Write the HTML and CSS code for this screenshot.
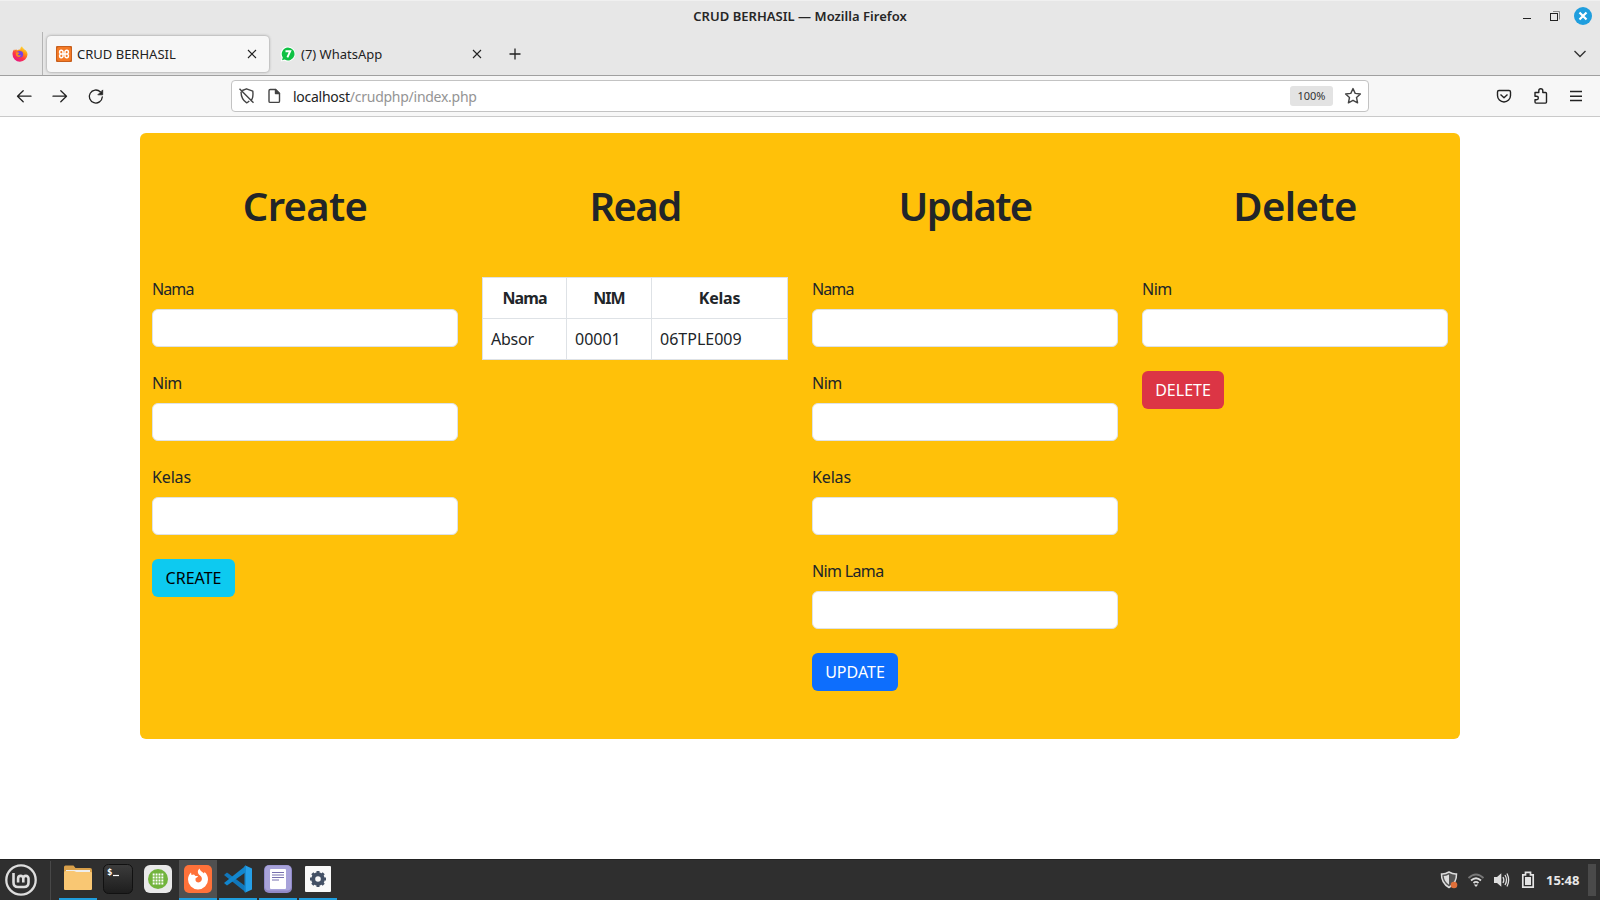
FILE: index.html
```html
<!DOCTYPE html>
<html lang="id">
<head>
<meta charset="utf-8">
<title>CRUD BERHASIL</title>
<link rel="stylesheet" href="styles.css">
</head>
<body>
<div class="desktop">
  <header class="titlebar">
    <span class="win-title">CRUD BERHASIL — Mozilla Firefox</span>
    <svg class="win-buttons" width="80" height="32" viewBox="1520 0 80 32">
      <path d="M1523 18.500h8" stroke="#222" fill="none"/>
      <path d="M1553 11.500h6.500v8" stroke="#8a8a8a" fill="none"/>
      <rect x="1550.500" y="13.500" width="7" height="7" stroke="#222" fill="none"/>
      <circle cx="1583" cy="16" r="9" fill="#1f9ede"/>
      <path d="M1579.500 12.500l7 7m0-7l-7 7" stroke="#fff" stroke-width="2.200"/>
    </svg>
  </header>

  <div class="tabstrip">
    <div class="pinned">
      <svg width="16" height="16" viewBox="0 0 16 16">
        <defs>
          <linearGradient id="fx" x1=".85" y1="0" x2=".25" y2="1"><stop offset="0" stop-color="#fff44f"/><stop offset=".35" stop-color="#ff980e"/><stop offset=".65" stop-color="#ff3647"/><stop offset="1" stop-color="#e31587"/></linearGradient>
        </defs>
        <path d="M8 15.700A7.500 7.500 0 0 1 .5 8C.5 6 1.200 4.500 2.200 3.200L2.500 4.500 4.200 3.200 5 4.500C6 3.800 7 3.500 8.500 3.500 8 2.500 8.800 1 10 .3 10.300 2 12 2.600 13 4L13.500 4C15 5.500 15.500 7 15.500 8.500A7.500 7.500 0 0 1 8 15.700z" fill="url(#fx)"/>
        <circle cx="7.800" cy="8.300" r="3.300" fill="#7542e5"/>
        <path d="M4 6.500c1.500-.5 2.500 0 3.500.2-.5 1.200-1.500 1.300-1.800 2 .8 1 2.500.7 3.300.2-.6 1.800-2.400 2.700-4 1.600C4 9.600 3.600 8 4 6.500z" fill="#ff8a16"/>
      </svg>
    </div>
    <div class="tab tab-active">
      <svg width="16" height="16" viewBox="0 0 16 16">
        <rect width="16" height="16" rx="1" fill="#c85f1c"/><rect x="1" y="1" width="14" height="14" rx="2" fill="#f47a26"/>
        <path d="M7 8H5.400a1.800 1.900 0 1 1 1.600-2.600v5.200A1.800 1.900 0 1 1 5.400 8M9 8h1.600A1.800 1.900 0 1 0 9 5.400v5.200A1.800 1.900 0 1 0 10.600 8M6.500 8h3" stroke="#fff" stroke-width="1.500" fill="none"/>
      </svg>
      <span class="tab-label">CRUD BERHASIL</span>
      <svg class="tab-close" width="10" height="10" viewBox="0 0 10 10"><path d="M1 1l8 8m0-8L1 9" stroke="#222" stroke-width="1.100"/></svg>
    </div>
    <div class="tab">
      <svg width="16" height="16" viewBox="0 0 16 16">
        <path d="M8 .5A7.500 7.500 0 1 1 4.500 14.700L.7 15.600 1.700 12A7.500 7.500 0 0 1 8 .5z" fill="#fff"/>
        <path d="M8 1.500A6.500 6.500 0 1 1 4.700 13.600L2 14.300 2.800 11.500A6.500 6.500 0 0 1 8 1.500z" fill="#0fc144"/>
        <path d="M5.500 5.200h4.700L7.400 11.400" stroke="#fff" stroke-width="1.900" fill="none"/>
      </svg>
      <span class="tab-label">(7) WhatsApp</span>
      <svg class="tab-close" width="10" height="10" viewBox="0 0 10 10"><path d="M1 1l8 8m0-8L1 9" stroke="#222" stroke-width="1.100"/></svg>
    </div>
    <svg class="newtab" width="12" height="12" viewBox="0 0 12 12"><path d="M6 .5v11M.5 6h11" stroke="#222" stroke-width="1.300"/></svg>
    <svg class="alltabs" width="14" height="8" viewBox="0 0 14 8"><path d="M1.500 1L7 6.500 12.500 1" stroke="#333" stroke-width="1.400" fill="none"/></svg>
  </div>

  <nav class="toolbar">
    <svg class="nav-icons" width="100" height="20" viewBox="10 87 100 20" fill="none" stroke="#222" stroke-width="1.300" stroke-linecap="round" stroke-linejoin="round">
      <path d="M31 97.200H17.500m5.700-5.500l-5.700 5.500 5.700 5.500"/>
      <path d="M53 97.200H66.500m-5.700-5.500l5.700 5.500-5.700 5.500"/>
      <path d="M102.300 98a6.500 6.500 0 1 1-2-5.200"/><path d="M102.700 91.300v4.500h-4.500z" fill="#222" stroke-width=".8"/>
    </svg>
    <div class="urlbar">
      <svg width="44" height="20" viewBox="235 86 44 20" fill="none" stroke="#444" stroke-width="1.400" stroke-linejoin="round">
        <path d="M239.300 90.500l4.200-1.700 6.300 2.400q.9 6.500-2 10M238 91.800q.2 7.800 5.700 11.100 1.500-.8 2.600-2M236.500 88.800l14 14"/>
        <path d="M266 90.700q0-1.200 1.200-1.200h5.300l4 4v7.700q0 1.200-1.200 1.200h-8.100q-1.200 0-1.200-1.200z"/><path d="M272.500 89.500v4h4z" fill="#444"/>
      </svg>
      <span class="url"><span class="host">localhost</span><span class="path">/crudphp/index.php</span></span>
      <span class="zoom">100%</span>
      <svg class="star" width="18" height="18" viewBox="0 0 18 18"><path d="M9 1.600l2.200 4.800 5.200.6-3.900 3.500 1.100 5.300L9 13.300l-4.600 2.500 1.100-5.300L1.600 7l5.200-.6z" stroke="#444" stroke-width="1.400" fill="none" stroke-linejoin="round"/></svg>
    </div>
    <svg class="tool-icons" width="90" height="20" viewBox="1495 86 90 20" fill="none" stroke="#222" stroke-width="1.400" stroke-linejoin="round">
      <path d="M1499 90.500h10q1.500 0 1.500 1.500v3.500a6.500 6.500 0 0 1-13 0V92q0-1.500 1.500-1.500zM1500.500 94.500l3.500 3.200 3.500-3.200"/>
      <path d="M1535 92.500h3.800v-1.800a2 2 0 0 1 4 0v1.800h2.700q1 0 1 1v8.600q0 1-1 1h-9.500q-1 0-1-1v-2.300h1.600a1.700 1.700 0 0 0 0-3.500h-1.600z"/>
      <path d="M1570 91.500h12m-12 4.700h12m-12 4.300h12"/>
    </svg>
  </nav>

  <main class="page">
    <div class="container">
      <section class="col">
        <h1 class="h-create">Create</h1>
        <label class="nama">Nama</label><input type="text">
        <label>Nim</label><input type="text">
        <label class="kelas">Kelas</label><input type="text">
        <button class="btn btn-info">CREATE</button>
      </section>
      <section class="col">
        <h1 class="h-read">Read</h1>
        <table>
          <tr><th class="c1">Nama</th><th class="c2">NIM</th><th class="c3">Kelas</th></tr>
          <tr><td class="name">Absor</td><td>00001</td><td>06TPLE009</td></tr>
        </table>
      </section>
      <section class="col">
        <h1 class="h-update">Update</h1>
        <label class="nama">Nama</label><input type="text">
        <label>Nim</label><input type="text">
        <label class="kelas">Kelas</label><input type="text">
        <label class="lama">Nim Lama</label><input type="text">
        <button class="btn btn-primary">UPDATE</button>
      </section>
      <section class="col">
        <h1 class="h-delete">Delete</h1>
        <label>Nim</label><input type="text">
        <button class="btn btn-danger">DELETE</button>
      </section>
    </div>
  </main>

  <footer class="taskbar">
    <div class="menu">
      <svg width="34" height="34" viewBox="4 863 34 34" fill="none" stroke="#dedede">
        <circle cx="21" cy="880" r="14.700" stroke-width="2.300"/>
        <path d="M13.500 873v9.500q0 4.500 4.500 4.500h6q4.500 0 4.500-4.500v-4a2.600 2.600 0 0 0-5.200 0v4m0-4a2.600 2.600 0 0 0-5.200 0v4" stroke-width="2.600"/>
      </svg>
    </div>
    <div class="task open">
      <svg width="30" height="30" viewBox="0 0 30 30"><path d="M1 3q0-1.500 1.500-1.500h8l2 2.500H27q2 0 2 2v10H1z" fill="#d9a04a"/><rect x="3" y="6" width="24" height="8" fill="#eee"/><path d="M1 8.500q0-1.500 1.500-1.500H11l2.500 1H28q1 0 1 1v16q0 1-1 1H2q-1 0-1-1z" fill="#f9c773"/></svg>
    </div>
    <div class="task">
      <svg width="30" height="30" viewBox="0 0 30 30"><defs><linearGradient id="tg" x2="0" y2="1"><stop stop-color="#3c3c3c"/><stop offset="1" stop-color="#1d1d1d"/></linearGradient></defs><rect x=".5" y=".5" width="29" height="29" rx="5" fill="url(#tg)" stroke="#111"/><text class="prompt" x="4" y="10.500">$</text><path d="M10 11.500h6" stroke="#fff" stroke-width="1.200"/></svg>
    </div>
    <div class="task">
      <svg width="30" height="30" viewBox="0 0 30 30"><rect x="1" y="1" width="28" height="28" rx="6" fill="#e9e9e9"/><circle cx="15" cy="15" r="10" fill="#72b43c"/><path d="M9.700 10.500h10.600M9.700 13.500h10.600M9.700 16.500h10.600M9.700 19.500h10.600" stroke="#fff" stroke-width="1.800" stroke-dasharray="1.900 1"/></svg>
    </div>
    <div class="task open current">
      <svg width="30" height="30" viewBox="0 0 30 30"><rect x="1" y="1" width="28" height="28" rx="5" fill="#ff7139"/><path d="M15 25.500A10 10 0 0 1 5 15.500C5 12.500 6 10.500 8 8.500L8.500 11l2.500-.5L12.500 12H15c-.3 1.500-2 1.800-2.500 2.500-.2 1 .3 1 0 2 1 2.500 4.500 2.500 6 0 1-2 .2-3.800-1.500-5C14.500 9.500 14 7 16.500 4.500c.5 2.500 3.500 3.500 4.500 5l.5-1.500c2.500 2 3.500 4.500 3.500 7.500A10 10 0 0 1 15 25.500z" fill="#fff"/></svg>
    </div>
    <div class="task open">
      <svg width="30" height="30" viewBox="0 0 30 30"><path d="M22.500 1.500L29 4.500v21l-6.500 3z" fill="#259fe8"/><path d="M1 11l3-2.500L23 22.500v6z" fill="#1177bb"/><path d="M1 19l3 2.500L23 8V1.500z" fill="#1286ce"/><path d="M21.500 2v26.300h1.500V1.500z" fill="#1689cf"/></svg>
    </div>
    <div class="task open">
      <svg width="30" height="30" viewBox="0 0 30 30"><rect x="1" y="1" width="28" height="28" rx="5" fill="#9089c8"/><rect x="2" y="1.500" width="26" height="25" rx="4" fill="#a8a3da"/><rect x="7" y="5" width="16" height="20" rx="1" fill="#fff"/><path d="M9 8.500h12M9 11h12M9 13.500h12M9 16h7" stroke="#7770ae"/></svg>
    </div>
    <div class="task open">
      <svg width="30" height="30" viewBox="0 0 30 30"><rect x="2" y="2" width="26" height="26" rx="1" fill="#f9f9f9"/><circle cx="15" cy="15" r="4.800" stroke="#435065" stroke-width="4" fill="none"/><path d="M15 7v3m0 10v3M7 15h3m10 0h3M9.300 9.300l2.200 2.200m7 7l2.200 2.200m0-11.400l-2.200 2.200m-7 7l-2.200 2.200" stroke="#435065" stroke-width="3"/></svg>
    </div>
    <div class="tray">
      <svg width="96" height="22" viewBox="1440 869 96 22">
        <path d="M1449 872q4 2.300 7.500 2 .3 9-7.500 13.500-7.800-4.500-7.500-13.500 3.500.3 7.500-2z" fill="#555" stroke="#dedede" stroke-width="1.500"/><path d="M1449 874.500q-3 1.500-5.300 1.600.5 5.500 5.300 8.700z" fill="#dedede"/><circle cx="1454" cy="885" r="3.300" fill="#e0703a"/>
        <g fill="none" stroke="#dedede" stroke-width="1.800"><path d="M1468.500 878q7.500-7 15 0" stroke="#777"/><path d="M1471 880.500q5-4.500 10 0"/><path d="M1473.500 883q2.500-2.200 5 0"/></g><path d="M1473.800 884.500h4.400l-2.200 2.500z" fill="#dedede"/>
        <path d="M1494 877h3l4.300-3.800v13.600L1497 883h-3z" fill="#dedede"/><path d="M1503 877q1.700 3 0 6M1505 875q3 5 0 10M1507 873.500q3.300 6.500 0 13" fill="none" stroke="#dedede" stroke-width="1.300"/>
        <path d="M1522.800 874.800h2.700v-2.500h5v2.500h2.700v12.400h-10.400z" fill="none" stroke="#e4e4e4" stroke-width="1.700"/><rect x="1525" y="877" width="6" height="8" fill="#e4e4e4"/>
      </svg>
      <span class="clock">15:48</span>
      <i class="show-desktop"></i>
    </div>
  </footer>
</div>
</body>
</html>
```
FILE: styles.css
```css
* { box-sizing: border-box; }
body { margin: 0; font-family: "Noto Sans", sans-serif; color: #212529; background: #fff; }
svg { display: block; flex: none; }
.desktop { width: 1600px; height: 900px; display: flex; flex-direction: column; overflow: hidden; white-space: nowrap; }

.titlebar { height: 32px; flex: none; background: #e7e7e7; border-top: 1px solid #f0f0f0; display: grid; grid-template-columns: 80px 1fr 80px; align-items: center; }
.titlebar svg { margin-top: -1px; }
.win-title { grid-column: 2; justify-self: center; font-size: 13px; font-weight: 600; line-height: 28px; padding-bottom: 2px; letter-spacing: .03px; color: #262626; }
.win-buttons { grid-column: 3; }

.tabstrip { height: 44px; flex: none; background: #e7e7e7; border-bottom: 1px solid #a0a0a0; display: flex; align-items: center; }
.pinned { width: 43px; height: 43px; flex: none; padding-left: 12px; border-right: 1px solid #b4b4b4; display: flex; align-items: center; }
.tab { width: 222px; height: 36px; flex: none; padding: 0 11px 0 9px; display: flex; align-items: center; font-size: 13px; border-radius: 4px; }
.tab-active { margin: 0 2px 0 4px; padding-right: 12px; background: #f7f7f7; box-shadow: 0 0 3px #888; }
.tab-label { margin-left: 5px; flex: 1; color: #222; }
.tab-close { margin-left: auto; }
.newtab { margin-left: 16px; }
.alltabs { margin-left: auto; margin-right: 13px; }

.toolbar { height: 41px; flex: none; background: #f7f7f7; border-bottom: 1px solid #cacaca; display: flex; align-items: center; padding: 0 15px 0 10px; }
.urlbar { width: 1138px; height: 32px; margin-left: 121px; padding: 0 6px; border: 1px solid #c3c3c3; border-radius: 4px; background: #fff; display: flex; align-items: center; }
.url { margin-left: 11px; font-size: 14px; letter-spacing: -.26px; color: #949494; }
.host { color: #222; }
.zoom { width: 43px; height: 20px; margin-left: auto; border-radius: 3px; background: #e3e3e3; font-size: 11px; line-height: 20px; text-align: center; color: #333; }
.star { margin-left: 11px; }
.tool-icons { margin-left: auto; }

.page { flex: 1; background: #fff; padding-top: 16px; }
.container { width: 1320px; height: 606px; margin: 0 auto; padding: 48px 0; border-radius: 6px; background: #ffc109; display: grid; grid-template-columns: repeat(4, 330px); }
.col { padding: 0 12px; }
h1 { margin: 0 0 46px; font-size: 40px; line-height: 50px; font-weight: 600; text-align: center; }
.h-create { letter-spacing: -.7px; }
.h-read { letter-spacing: -1.6px; }
.h-update { letter-spacing: -1.7px; }
.h-delete { letter-spacing: -.6px; }
label { display: block; height: 24px; margin-bottom: 8px; font-size: 16px; line-height: 24px; letter-spacing: -.5px; }
.nama { letter-spacing: -.9px; }
.kelas { letter-spacing: -.15px; }
.lama { letter-spacing: -.65px; }
input { display: block; width: 100%; height: 38px; margin: 0 0 24px; border: 1px solid #dee2e6; border-radius: 6px; background: #fff; }
.btn { display: block; height: 38px; padding: 0; border: 0; border-radius: 6px; font: 16px/24px "Noto Sans", sans-serif; color: #fff; text-align: center; }
.btn-info { width: 83px; background: #0dcaf0; color: #000; }
.btn-primary { width: 86px; background: #0d6efd; }
.btn-danger { width: 82px; background: #dc3545; }
table { width: 306px; table-layout: fixed; border-collapse: collapse; background: #fff; font-size: 16px; line-height: 24px; }
th, td { height: 41px; padding: 8px; border: 1px solid #dee2e6; text-align: left; }
th { text-align: center; font-weight: 700; }
.c1 { width: 84px; letter-spacing: -.9px; }
.c2 { width: 85px; letter-spacing: -.9px; }
.c3 { letter-spacing: -.2px; }
.name { letter-spacing: -.25px; }

.taskbar { height: 41px; flex: none; background: #2f2f2f; border-top: 1px solid #222; display: flex; align-items: stretch; }
.menu { width: 51px; padding: 0 0 2px 4px; margin: 1px 8px 0 0; border-right: 1px solid #484848; display: flex; align-items: center; }
.task { width: 38px; margin-right: 2px; padding-top: 4px; display: flex; justify-content: center; border-bottom: 2px solid transparent; }
.open { border-bottom-color: #1f9ede; }
.current { background: #505050; }
.prompt { font: bold 9px "DejaVu Sans Mono", monospace; fill: #fff; }
.tray { margin-left: auto; display: flex; align-items: center; }
.clock { width: 36px; margin-left: 10px; font-size: 13px; font-weight: 700; color: #e8e8e8; }
.show-desktop { width: 8px; height: 32px; margin: 0 4px 0 6px; background: #4a4a4a; }
```
